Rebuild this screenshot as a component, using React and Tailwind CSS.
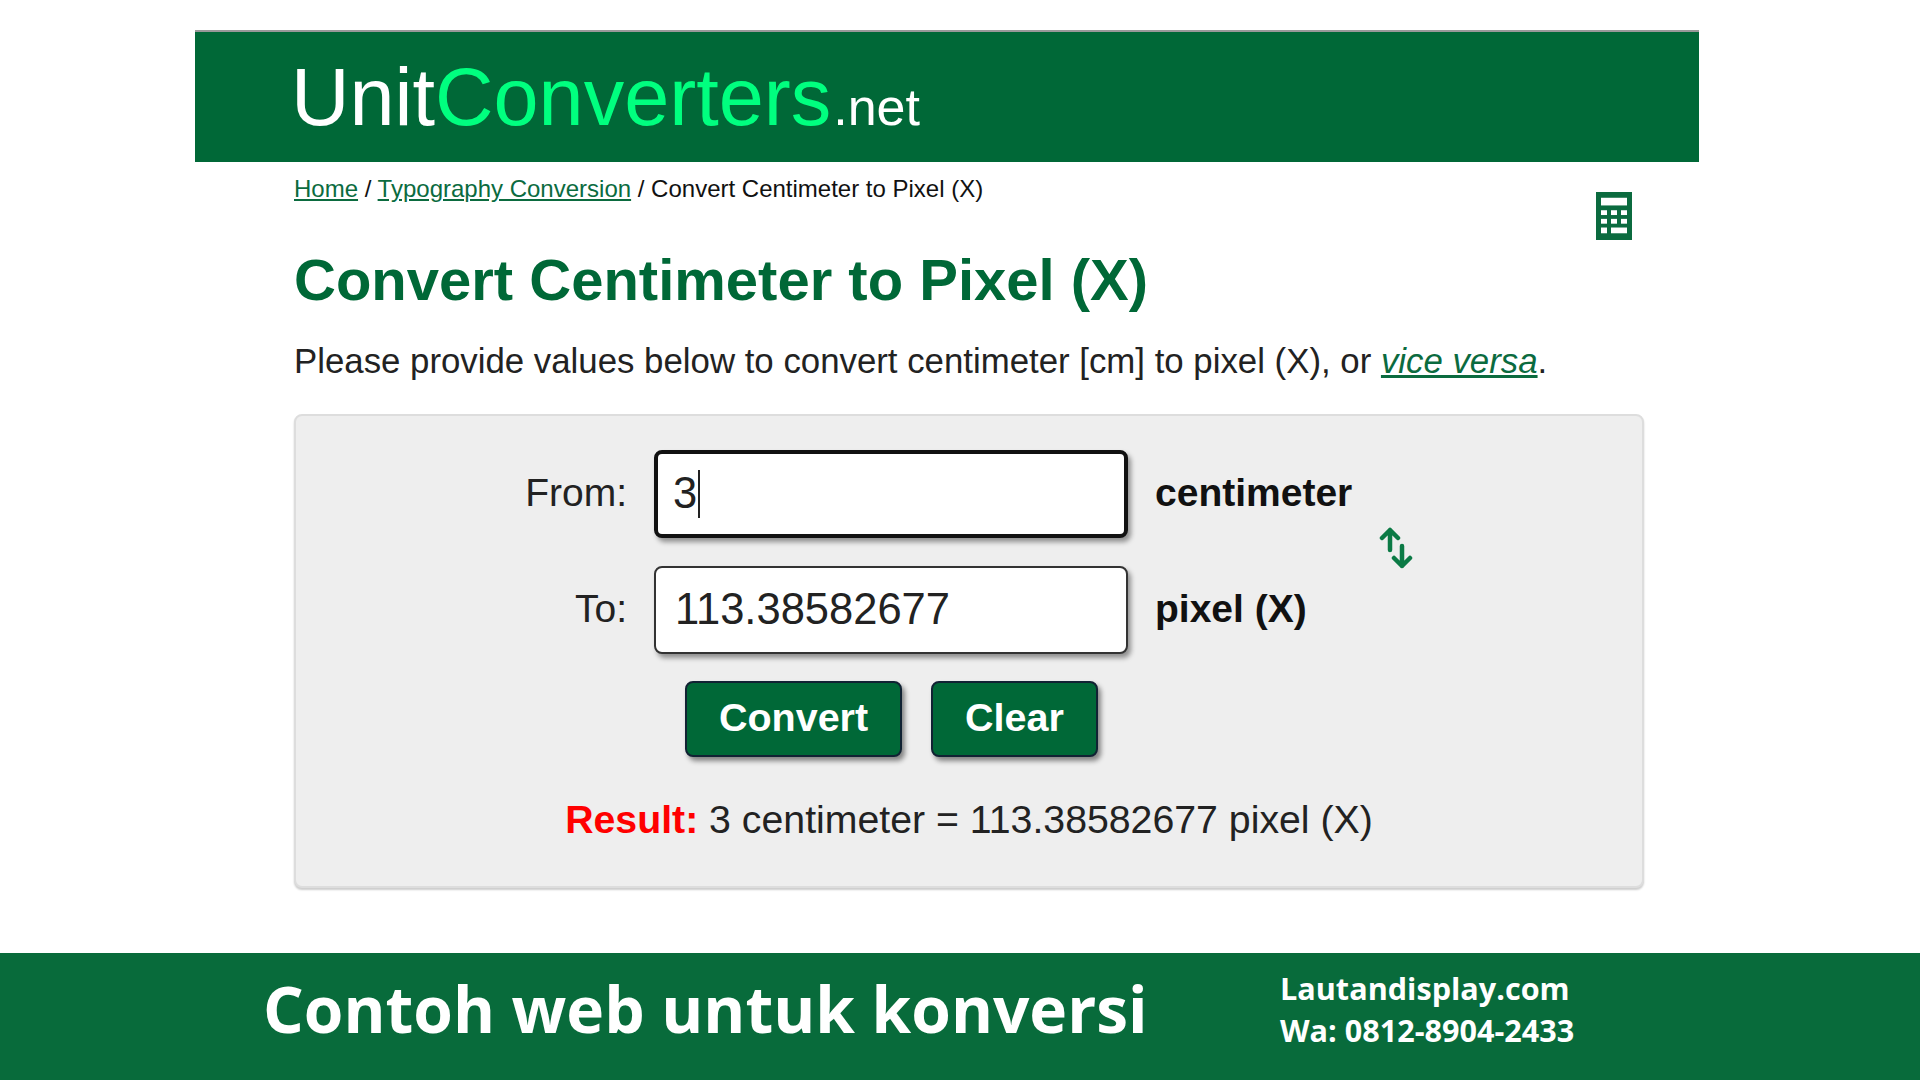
const sans = "font-['Liberation_Sans',Arial,sans-serif]";

const CalcIcon = () => (
  <svg width="36" height="48" viewBox="0 0 36 50" preserveAspectRatio="none" className="block">
    <rect width="36" height="50" fill="#0b6b3f" />
    <rect x="5" y="6" width="26" height="8" fill="#fff" />
    <rect x="5" y="19" width="6" height="5" fill="#fff" />
    <rect x="15" y="19" width="6" height="5" fill="#fff" />
    <rect x="25" y="19" width="6" height="5" fill="#fff" />
    <rect x="5" y="28" width="6" height="5" fill="#fff" />
    <rect x="15" y="28" width="6" height="5" fill="#fff" />
    <rect x="25" y="28" width="6" height="5" fill="#fff" />
    <rect x="5" y="37" width="6" height="6" fill="#fff" />
    <rect x="15" y="37" width="16" height="6" fill="#fff" />
  </svg>
);

const SwapIcon = () => (
  <svg width="34" height="44" viewBox="0 0 34 44" fill="none" stroke="#0b7a45" strokeWidth="4.5" strokeLinecap="round" strokeLinejoin="round" className="block">
    <path d="M11 24V4M3 12l8-8 8 8" />
    <path d="M23 20v20M15 32l8 8 8-8" />
  </svg>
);

const Row = ({ label, value, unit, focused }) => (
  <div className="flex items-center">
    <label className="w-[358px] pb-[2px] pr-[27px] text-right text-[39px] text-[#222]">{label}</label>
    <div
      className={`flex h-[88px] w-[474px] items-center rounded-lg bg-white text-[43.5px] text-[#222] shadow-[3px_4px_5px_rgba(0,0,0,0.4)] ${
        focused ? "border-[4px] border-[#111] pl-[15px]" : "border-2 border-[#333] pl-[19px]"
      }`}
    >
      {value}
      {focused && <span className="ml-px h-[48px] w-[2px] bg-[#222]" />}
    </div>
    <span className="ml-[27px] pb-[2px] text-[39px] font-bold text-[#111]">{unit}</span>
  </div>
);

export default function App() {
  return (
    <div className={`flex min-h-screen flex-col bg-white ${sans}`}>
      <div className="ml-[195px] flex w-[1504px] flex-1 flex-col pt-[30px]">
        {/* site header */}
        <div className="flex h-[132px] items-center border-t-2 border-[#999] bg-[#006837] pl-[96px]">
          <div className="text-[81px] leading-none text-white">
            Unit<span className="text-[#00ff7f]">Converters</span>
            <span className="ml-[2px] text-[52px]">.net</span>
          </div>
        </div>

        <div className="relative pl-[99px] pr-[55px]">
          <div className="absolute right-[67px] top-[30px]">
            <CalcIcon />
          </div>
          <div className="pt-[13px] text-[24px] leading-[28px] text-[#111]">
            <span className="text-[#0b6b3f] underline">Home</span> /{" "}
            <span className="text-[#0b6b3f] underline">Typography Conversion</span> / Convert Centimeter to Pixel (X)
          </div>
          <h1 className="mt-[45px] text-[58px] font-bold leading-[64px] text-[#006837]">Convert Centimeter to Pixel (X)</h1>
          <p className="mt-[27px] text-[34.8px] leading-[44px] text-[#222]">
            Please provide values below to convert centimeter [cm] to pixel (X), or{" "}
            <span className="italic text-[#0b6b3f] underline">vice versa</span>.
          </p>

          {/* converter panel */}
          <div className="relative mt-[31px] h-[474px] rounded-lg border-2 border-[#ddd] bg-[#eee] pt-[34px] shadow-[0_2px_2px_rgba(0,0,0,0.2)]">
            <div className="flex flex-col gap-[28px]">
              <Row label="From:" value="3" unit="centimeter" focused />
              <Row label="To:" value="113.38582677" unit="pixel (X)" />
            </div>
            <div className="absolute left-[1083px] top-[110px]">
              <SwapIcon />
            </div>
            <div className="mt-[27px] flex gap-[29px] pl-[389px]">
              <button className="h-[76px] w-[217px] rounded-lg border-2 border-[#123] bg-[#006837] pb-[2px] text-[39.5px] font-bold text-white shadow-[3px_4px_5px_rgba(0,0,0,0.45)]">
                Convert
              </button>
              <button className="h-[76px] w-[167px] rounded-lg border-2 border-[#123] bg-[#006837] pb-[2px] text-[39.5px] font-bold text-white shadow-[3px_4px_5px_rgba(0,0,0,0.45)]">
                Clear
              </button>
            </div>
            <div className="mt-[40px] text-center text-[39.25px] leading-[44px] text-[#222]">
              <span className="font-bold text-[#f00]">Result:</span> 3 centimeter = 113.38582677 pixel (X)
            </div>
          </div>
        </div>
      </div>

      {/* promo footer */}
      <div className="flex h-[127px] items-center bg-[#086b3b] pb-[16px] pl-[263px] font-['Open_Sans',sans-serif] font-bold text-white">
        <div className="w-[1017px] text-[64px] leading-none">Contoh web untuk konversi</div>
        <div className="text-[30.6px] leading-[42px]">
          <div>Lautandisplay.com</div>
          <div>Wa: 0812-8904-2433</div>
        </div>
      </div>
    </div>
  );
}
